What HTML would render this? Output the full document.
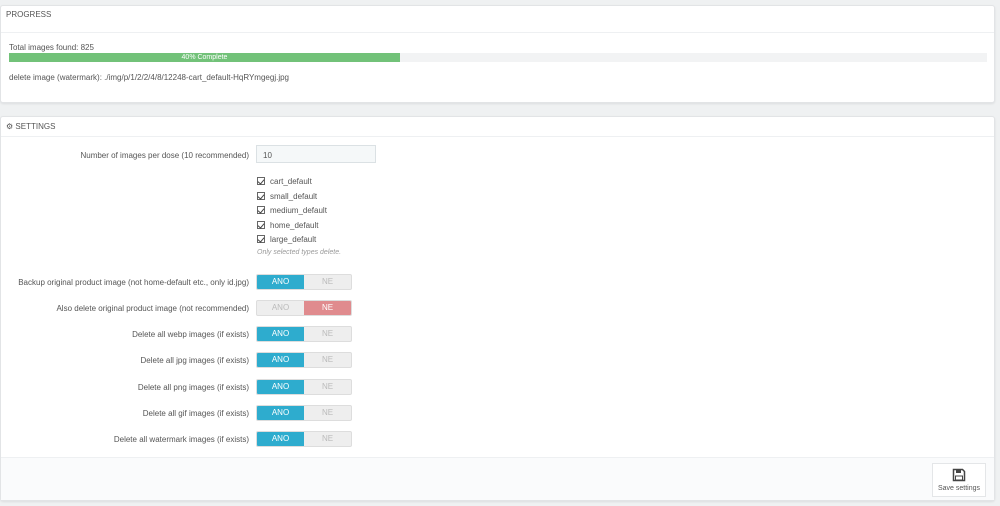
<!DOCTYPE html><html><head><style>
*{box-sizing:border-box;margin:0;padding:0}
body{width:1000px;height:506px;background:#eff1f2;font-family:"Liberation Sans",sans-serif;font-size:8px;color:#555;position:relative;overflow:hidden}
.p{position:absolute;left:0;width:995px;background:#fff;border:1px solid #e2e4e6;border-radius:3px;box-shadow:0 1px 2px rgba(0,0,0,.08)}
.h{position:absolute;left:0;right:0;top:0;border-bottom:1px solid #eef0f2;font-size:8px;color:#555;padding-left:5px;text-transform:uppercase}
.a{position:absolute;white-space:nowrap}
.lab{position:absolute;right:745px;white-space:nowrap;text-align:right}
.cb{position:absolute;left:256px;white-space:nowrap}
.cb i{display:inline-block;width:8px;height:8px;border:1px solid #666;margin-right:5px;vertical-align:-1px;position:relative}
.cb i:after{content:"";position:absolute;left:1px;top:0;width:3px;height:5px;border:solid #444;border-width:0 1px 1px 0;transform:rotate(40deg)}
.sw{position:absolute;left:255px;width:96px;height:16px;display:flex;border-radius:2px;overflow:hidden;background:#eeeeee;border:1px solid #ddd}
.sw span{flex:1;text-align:center;line-height:14px;font-size:8px;color:#bbb}
.sw .on{background:#2eacce;color:#fff}
.sw .no{background:#e08b8e;color:#fff}
</style></head><body>
<div class="p" style="top:5px;height:98px">
<div class="h" style="height:27px;line-height:18px">Progress</div>
<div class="a" style="left:8px;top:37px">Total images found: 825</div>
<div class="a" style="left:8px;top:47px;width:978px;height:9px;background:#f2f3f4">
<div style="width:391px;height:9px;background:#72c279;color:#fff;text-align:center;font-size:7px;line-height:9px">40% Complete</div></div>
<div class="a" style="left:8px;top:67px">delete image (watermark): ./img/p/1/2/2/4/8/12248-cart_default-HqRYmgegj.jpg</div>
</div>
<div class="p" style="top:116px;height:385px">
<div class="h" style="height:20px;line-height:19px">⚙ Settings</div>
<div class="lab" style="top:34px">Number of images per dose (10 recommended)</div>
<div class="a" style="left:255px;top:28px;width:120px;height:18px;background:#f5f8f9;border:1px solid #dbe1e4;padding:5px 6px;color:#555">10</div>
<div class="cb" style="top:60px"><i></i>cart_default</div>
<div class="cb" style="top:75px"><i></i>small_default</div>
<div class="cb" style="top:89px"><i></i>medium_default</div>
<div class="cb" style="top:104px"><i></i>home_default</div>
<div class="cb" style="top:118px"><i></i>large_default</div>
<div class="a" style="left:256px;top:132px;font-style:italic;color:#999;font-size:7px">Only selected types delete.</div>
<div class="lab" style="top:161px">Backup original product image (not home-default etc., only id.jpg)</div>
<div class="sw" style="top:157px"><span class="on">ANO</span><span>NE</span></div>
<div class="lab" style="top:187px">Also delete original product image (not recommended)</div>
<div class="sw" style="top:183px"><span>ANO</span><span class="no">NE</span></div>
<div class="lab" style="top:213px">Delete all webp images (if exists)</div>
<div class="sw" style="top:209px"><span class="on">ANO</span><span>NE</span></div>
<div class="lab" style="top:239px">Delete all jpg images (if exists)</div>
<div class="sw" style="top:235px"><span class="on">ANO</span><span>NE</span></div>
<div class="lab" style="top:266px">Delete all png images (if exists)</div>
<div class="sw" style="top:262px"><span class="on">ANO</span><span>NE</span></div>
<div class="lab" style="top:292px">Delete all gif images (if exists)</div>
<div class="sw" style="top:288px"><span class="on">ANO</span><span>NE</span></div>
<div class="lab" style="top:318px">Delete all watermark images (if exists)</div>
<div class="sw" style="top:314px"><span class="on">ANO</span><span>NE</span></div>
<div class="a" style="left:0;right:0;top:340px;bottom:0;background:#fafbfc;border-top:1px solid #eef0f2"></div>
<div class="a" style="left:931px;top:346px;width:54px;height:34px;background:#fff;border:1px solid #e4e6e8;text-align:center;font-size:7px;color:#555">
<svg width="14" height="14" viewBox="0 0 14 14" style="margin-top:4px;display:block;margin-left:19px"><path d="M1.5 1.5h9l2 2v9h-11z" fill="none" stroke="#444" stroke-width="1.5"/><rect x="4" y="1.5" width="5" height="3.5" fill="#444"/><rect x="3.5" y="8" width="7" height="4" fill="none" stroke="#444"/></svg>
<div style="margin-top:3px">Save settings</div></div>
</div>
</body></html>
